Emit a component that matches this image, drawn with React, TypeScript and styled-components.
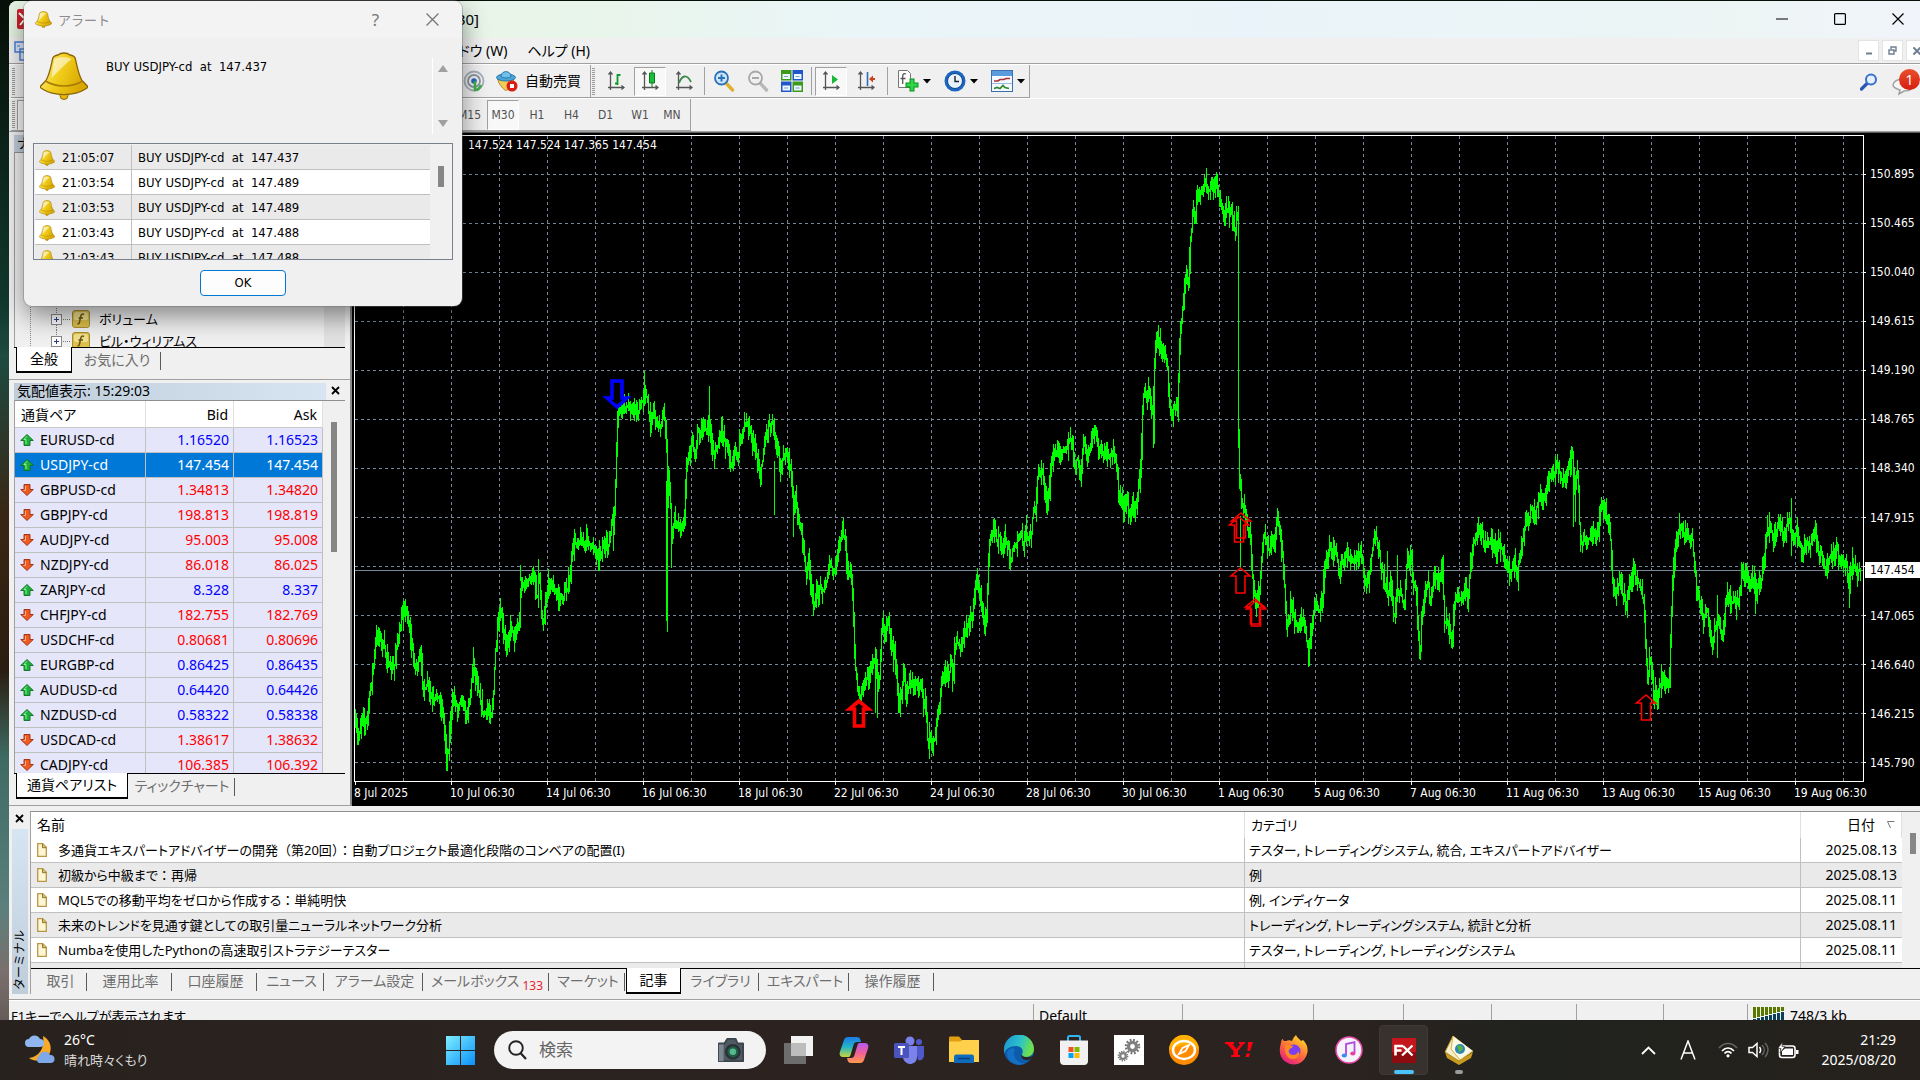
import React from 'react';
import styled, { createGlobalStyle, css } from 'styled-components';

const UI = "'Noto Sans', 'Noto Sans CJK JP', sans-serif";
const TAHOMA = "'DejaVu Sans Condensed', 'DejaVu Sans', 'Noto Sans CJK JP', sans-serif";

const Global = createGlobalStyle`
  * { box-sizing: border-box; }
  html, body { margin: 0; height: 100%; overflow: hidden; }
  body {
    background: #131a14;
    color: #000;
    font: 14px/20px ${UI};
    font-feature-settings: 'palt';
  }
  button, input { font: inherit; font-feature-settings: inherit; color: inherit; margin: 0; padding: 0; border: 0; background: none; }
  table { border-spacing: 0; border-collapse: separate; width: 100%; table-layout: fixed; }
  th, td { padding: 0; font-weight: 400; text-align: left; white-space: nowrap; }
  svg { display: block; flex: none; }
`;

/* ---------- shell ---------- */

const Desktop = styled.div`
  height: 100vh;
  display: flex;
  flex-direction: column;
  background: linear-gradient(180deg, #071008 0%, #12392e 28%, #1e4a40 33%, #3a2614 48%, #2a1c10 62%, #3e6a62 70%, #5b7f7c 84%, #7a6f6c 90%, #4a4440 100%);
`;

const AppWindow = styled.main`
  flex: 1;
  min-height: 0;
  margin: 1px 0 0 9px;
  background: #f0f0f0;
  border-top-left-radius: 8px;
  display: flex;
  flex-direction: column;
  overflow: hidden;
`;

const TitleBar = styled.header`
  flex: none;
  height: 37px;
  padding: 0 0 1px 8px;
  display: flex;
  align-items: center;
  background: linear-gradient(90deg, #e6f3e4 0%, #e8f5e8 28%, #eaf5f8 45%, #eaf3f9 65%, #ecf5f4 90%, #f1f4fa 100%);
`;

const TitleText = styled.span`
  width: 442px;
  text-align: right;
  font-size: 15px;
  flex: none;
`;

const WindowButtons = styled.div`
  margin-left: auto;
  display: flex;
`;

const WindowButton = styled.button`
  width: 58px;
  height: 36px;
  display: grid;
  place-items: center;
  &:last-child { width: 51px; padding-left: 7px; }
`;

const MenuBar = styled.nav`
  flex: none;
  height: 26px;
  padding-left: 5px;
  display: flex;
  align-items: center;
  border-bottom: 1px solid #a0a0a0;
`;

const MenuItems = styled.div`
  display: flex;
  gap: 20px;
  width: 560px;
  justify-content: flex-end;
`;

const MdiButtons = styled.div`
  margin-left: auto;
  display: flex;
  gap: 3px;
`;

const MdiButton = styled.button`
  width: 21px;
  height: 21px;
  background: #fff;
  border: 1px solid #e3e3e3;
  display: grid;
  place-items: center;
  &:last-child { width: 14px; border-right: 0; overflow: hidden; place-items: center start; padding-left: 6px; }
`;

const Toolbar = styled.div<{ $h: number }>`
  flex: none;
  height: ${p => p.$h}px;
  display: flex;
  border-top: 1px solid #fff;
  padding-left: 2px;
`;

const ToolGroup = styled.div<{ $w: number }>`
  width: ${p => p.$w}px;
  height: 100%;
  display: flex;
  align-items: center;
  border-right: 1px solid #a0a0a0;
  border-bottom: 1px solid #a0a0a0;
`;

const Grip = styled.span`
  width: 3px;
  height: 27px;
  margin: 0 2px 0 1px;
  flex: none;
  background: repeating-linear-gradient(180deg, #9a9a9a 0 1px, #f0f0f0 1px 2px);
`;

const ToolButton = styled.button<{ $w: number; $on?: boolean }>`
  width: ${p => p.$w}px;
  height: 29px;
  flex: none;
  display: flex;
  align-items: center;
  justify-content: center;
  gap: 7px;
  white-space: nowrap;
  ${p => p.$on && css`
    border: 1px solid #a0a0a0;
    border-right-color: #fff;
    border-bottom-color: #fff;
    background: #f8f8f8;
  `}
`;

const DropButton = styled(ToolButton)`
  gap: 4px;
`;

const ToolSeparator = styled.span`
  width: 1px;
  height: 28px;
  margin: 0 3px;
  flex: none;
  background: #a0a0a0;
`;

const ToolTail = styled.div`
  margin-left: auto;
  display: flex;
  align-items: center;
  gap: 14px;
`;

const MailButton = styled.button`
  position: relative;
  width: 28px;
  height: 30px;
`;

const MailBadge = styled.span`
  position: absolute;
  left: 7px;
  top: 2px;
  width: 21px;
  height: 21px;
  border-radius: 50%;
  background: linear-gradient(#e8502f, #d81c10);
  color: #fff;
  font-size: 14px;
  line-height: 21px;
  text-align: center;
`;

const FrameButton = styled.button<{ $w: number; $on?: boolean }>`
  width: ${p => p.$w}px;
  height: 30px;
  flex: none;
  font: 12px/28px ${TAHOMA};
  color: #505050;
  text-align: center;
  ${p => p.$on && css`
    border: 1px solid #a0a0a0;
    border-right-color: #fff;
    border-bottom-color: #fff;
    background: #f8f8f8;
  `}
`;

const Main = styled.div`
  flex: 1;
  min-height: 0;
  display: grid;
  grid-template: minmax(0, 1fr) / 343px minmax(0, 1fr);
  border-top: 1px solid #a0a0a0;
`;

/* ---------- left column ---------- */

const Side = styled.aside`
  display: flex;
  flex-direction: column;
  min-height: 0;
  border-right: 2px solid #8a8a8a;
  border-bottom: 1px solid #a0a0a0;
`;

const Pane = styled.section<{ $h?: number }>`
  ${p => (p.$h ? `height: ${p.$h}px; flex: none; border-bottom: 1px solid #a0a0a0;` : 'flex: 1; min-height: 0;')}
  display: flex;
  flex-direction: column;
  padding: 3px 5px 6px;
`;

const PaneHead = styled.div`
  height: 17px;
  flex: none;
  display: flex;
  line-height: 16px;
`;

const PaneTitle = styled.h2`
  margin: 0;
  flex: 1;
  padding-left: 3px;
  font: inherit;
  background: linear-gradient(90deg, #bfcddb, #d7e4f2);
`;

const CloseButton = styled.button`
  width: 19px;
  height: 15px;
  display: grid;
  place-items: center;
`;

const PaneBox = styled.div`
  flex: 1;
  min-height: 0;
  display: flex;
  overflow: hidden;
  border-top: 1px solid #8f8f8f;
  border-left: 1px solid #a0a0a0;
`;

const Tree = styled.ul`
  flex: 1;
  margin: 0 0 -5px 15px;
  padding: 0 0 0 20px;
  list-style: none;
  display: flex;
  flex-direction: column;
  justify-content: flex-end;
  border-left: 1px dotted #8a8a8a;
`;

const TreeItem = styled.li`
  height: 22px;
  display: flex;
  align-items: center;
  font-size: 13px;
  line-height: 22px;
  white-space: nowrap;
  span { padding-left: 9px; }
`;

const Track = styled.div<{ $w: number; $bg?: string; $top: number }>`
  width: ${p => p.$w}px;
  flex: none;
  background: ${p => p.$bg ?? '#f0f0f0'};
  padding: ${p => p.$top}px 0 0 8px;
`;

const Thumb = styled.div<{ $h: number }>`
  width: 6px;
  height: ${p => p.$h}px;
  background: #868686;
`;

const Tabs = styled.div`
  height: 26px;
  flex: none;
  display: flex;
  border-top: 1px solid #000;
  padding-left: 2px;
`;

const Tab = styled.button<{ $w: number; $on?: boolean }>`
  width: ${p => p.$w}px;
  flex: none;
  height: 25px;
  color: #6e6e6e;
  line-height: 22px;
  white-space: nowrap;
  position: relative;
  border: 1px solid transparent;
  border-top: 0;
  ${p => p.$on ? css`
    color: #000;
    background: #fff;
    border: 1px solid #000;
    border-top: 0;
    border-bottom-width: 2px;
    margin-top: -1px;
    height: 26px;
  ` : css`
    &::after {
      content: '';
      position: absolute;
      right: 0;
      top: 4px;
      height: 18px;
      border-right: 1px solid #5a5a5a;
    }
  `}
`;

const TabCount = styled.sub`
  color: #e8222c;
  font: 12px/12px ${UI};
  padding-left: 3px;
`;

const WatchTable = styled.table`
  flex: 1;
  background: #fff;
  align-self: flex-start;
  th { height: 27px; padding: 0 5px 0 6px; border-right: 1px solid #e0e0e0; border-bottom: 1px solid #c8c8c8; line-height: 25px; }
  th + th { text-align: right; }
`;

const WatchRow = styled.tr<{ $up: boolean; $selected?: boolean }>`
  td {
    height: 25px;
    line-height: 24px;
    padding-right: 4px;
    text-align: right;
    color: ${p => (p.$selected ? '#fff' : p.$up ? '#0000ff' : '#ff0000')};
    background: ${p => (p.$selected ? '#0078d7' : '#e6e6fa')};
    border-right: 1px solid #c0c0c0;
    border-bottom: 1px solid #c0c0c0;
  }
  td:first-child { color: ${p => (p.$selected ? '#fff' : '#000')}; }
`;

const Pair = styled.div`
  display: flex;
  align-items: center;
  gap: 6px;
  padding-left: 5px;
`;

/* ---------- chart ---------- */

const ChartPanel = styled.section`
  display: grid;
  grid-template: minmax(0, 1fr) 24px / minmax(0, 1fr) 56px;
  padding: 2px 0 0 2px;
  background: #000;
  color: #fff;
  font: 12px/16px ${TAHOMA};
  border-top: 1px solid #606060;
`;

const Plot = styled.div`
  position: relative;
  border: 1px solid #fff;
  overflow: hidden;
  svg { width: 100%; height: 100%; }
`;

const Quote = styled.span`
  position: absolute;
  left: 113px;
  top: 1px;
  white-space: nowrap;
`;

const PriceAxis = styled.div`
  position: relative;
  display: flex;
  flex-direction: column;
  justify-content: space-between;
  padding: 31px 0 11px;
`;

const Price = styled.span`
  height: 16px;
  display: flex;
  align-items: center;
  gap: 4px;
  &::before { content: ''; width: 2px; height: 1px; background: #fff; }
`;

const CurrentPrice = styled.output`
  position: absolute;
  left: 1px;
  right: 0;
  top: 427px;
  height: 16px;
  padding-left: 5px;
  background: #fff;
  color: #000;
`;

const DateAxis = styled.div`
  display: flex;
  grid-column: 1 / -1;
  overflow: hidden;
`;

const DateLabel = styled.span`
  flex: none;
  width: 96px;
  white-space: nowrap;
  &::before { content: ''; display: block; width: 1px; height: 3px; margin-left: 1px; background: #fff; }
`;

/* ---------- terminal ---------- */

const Terminal = styled.section`
  flex: none;
  height: 194px;
  display: grid;
  grid-template: minmax(0, 1fr) / 21px minmax(0, 1fr);
  padding: 5px 0 5px;
  border-bottom: 1px solid #a0a0a0;
`;

const TerminalStrip = styled.div`
  display: flex;
  flex-direction: column;
  align-items: center;
  gap: 3px;
  min-height: 0;
`;

const TerminalName = styled.h2`
  margin: 0;
  flex: 1;
  width: 16px;
  background: linear-gradient(#bfcddb, #d7e4f2);
  writing-mode: vertical-rl;
  text-orientation: sideways;
  transform: rotate(180deg);
  font: 12px/16px ${UI};
  padding-top: 4px;
  white-space: nowrap;
`;

const TerminalBody = styled.div`
  display: flex;
  flex-direction: column;
  min-width: 0;
  min-height: 0;
  border-top: 1px solid #8f8f8f;
  border-left: 1px solid #a0a0a0;
`;

const Articles = styled.div`
  flex: 1;
  min-height: 0;
  display: flex;
  overflow: hidden;
`;

const ArticleTable = styled.table`
  flex: 1;
  align-self: flex-start;
  background: #fff;
  font-size: 13px;
  th { height: 26px; padding: 0 6px; border-right: 1px solid #e0e0e0; }
  td { height: 25px; padding: 0 5px 0 4px; line-height: 24px; border-right: 1px solid #c0c0c0; border-bottom: 1px solid #c0c0c0; }
  th:first-child { font-size: 14px; }
  th:last-child, td:last-child { text-align: right; font-size: 14px; }
  tbody tr:nth-child(even) { background: #eaeaea; }
  td:last-child { border-right: 0; }
`;

const ArticleName = styled.div`
  display: flex;
  align-items: center;
  gap: 11px;
  padding-left: 2px;
`;

const FullWidth = styled.span`
  font-feature-settings: normal;
`;

const SortLabel = styled.span`
  display: flex;
  justify-content: flex-end;
  align-items: center;
  gap: 12px;
`;

const StatusBar = styled.footer`
  flex: none;
  height: 20px;
  display: flex;
  overflow: hidden;
  border-top: 1px solid #fff;
  padding: 3px 0 0 2px;
`;

const StatusCell = styled.span<{ $w?: number }>`
  ${p => (p.$w ? `width: ${p.$w}px; flex: none;` : 'flex: 1; font-size: 13px;')}
  height: 24px;
  display: flex;
  gap: 6px;
  line-height: 24px;
  white-space: nowrap;
  &:not(:first-child) { border-left: 1px solid #a0a0a0; padding-left: 5px; }
`;

/* ---------- taskbar ---------- */

const Taskbar = styled.nav`
  flex: none;
  height: 60px;
  display: grid;
  grid-template-columns: 440px 1fr auto;
  align-items: center;
  background: linear-gradient(90deg, #28221e 0%, #2c2320 40%, #2b2320 70%, #20221e 80%, #26211c 100%);
  color: #fff;
`;

const Weather = styled.button`
  justify-self: start;
  margin-left: 24px;
  display: flex;
  align-items: center;
  gap: 9px;
  text-align: left;
  line-height: 20px;
  color: #fff;
`;

const Muted = styled.span`
  display: block;
  font-size: 13px;
  color: #d8d8d8;
`;

const TaskIcons = styled.div`
  display: flex;
  align-items: center;
`;

const TaskButton = styled.button<{ $on?: boolean }>`
  width: 49px;
  height: 50px;
  margin-right: 6px;
  flex: none;
  display: grid;
  place-items: center;
  position: relative;
  border-radius: 4px;
  border: 1px solid ${p => (p.$on ? '#3f3a37' : 'transparent')};
  background: ${p => (p.$on ? '#38322f' : 'transparent')};
`;

const RunMark = styled.span<{ $on?: boolean }>`
  position: absolute;
  bottom: 0;
  width: ${p => (p.$on ? 20 : 8)}px;
  height: 4px;
  border-radius: 2px;
  background: ${p => (p.$on ? '#4cc2ff' : '#9a9a9a')};
`;

const StartButton = styled.button`
  width: 41px;
  height: 50px;
  margin-right: 13px;
  display: grid;
  place-items: center;
`;

const SearchBox = styled.label`
  width: 272px;
  height: 38px;
  margin-right: 8px;
  border-radius: 19px;
  background: #f3f3f3;
  display: flex;
  align-items: center;
  gap: 12px;
  padding: 0 20px 0 14px;
  input { flex: 1; min-width: 0; font-size: 17px; outline: 0; }
  input::placeholder { color: #666; opacity: 1; }
`;

const Tray = styled.div`
  display: flex;
  align-items: center;
  padding-right: 24px;
`;

const TrayButton = styled.button<{ $w: number }>`
  width: ${p => p.$w}px;
  height: 40px;
  display: grid;
  place-items: center;
  color: #fff;
`;

const Clock = styled.time`
  width: 88px;
  text-align: right;
  line-height: 20px;
`;

/* ---------- alert dialog ---------- */

const Dialog = styled.div`
  position: absolute;
  left: 24px;
  top: 1px;
  width: 438px;
  height: 305px;
  border-radius: 8px;
  background: #f0f0f0;
  box-shadow: 0 0 0 1px rgba(110, 110, 110, 0.4), 0 10px 26px rgba(0, 0, 0, 0.45);
  display: flex;
  flex-direction: column;
  overflow: hidden;
  font: 13px/18px ${TAHOMA};
`;

const DialogTitle = styled.header`
  height: 37px;
  flex: none;
  display: flex;
  align-items: center;
  padding-left: 11px;
  background: #f3f3f3;
  color: #8c8c8c;
  font: 13px/20px ${UI};
  span { flex: 1; padding-left: 6px; }
`;

const DialogButton = styled.button`
  width: 57px;
  height: 36px;
  display: grid;
  place-items: center;
  color: #777;
  font-size: 17px;
  &:last-child { margin-right: 1px; }
`;

const Message = styled.div`
  height: 96px;
  flex: none;
  display: flex;
  padding: 14px 10px 0 16px;
  white-space: pre;
  p { margin: 6px 0 0; padding-left: 18px; flex: 1; }
`;

const Spinner = styled.div`
  width: 20px;
  height: 76px;
  margin-top: 6px;
  border-left: 1px solid #fff;
  display: flex;
  flex-direction: column;
  align-items: center;
  justify-content: space-between;
  padding: 7px 0;
`;

const AlertList = styled.div`
  height: 117px;
  flex: none;
  margin: 9px 9px 0;
  border: 1px solid #7a7f8e;
  background: #f0f0f0;
  display: flex;
  overflow: hidden;
  padding: 1px;
`;

const AlertTable = styled.table`
  flex: 1;
  align-self: flex-start;
  td { height: 25px; padding: 2px 0 0 6px; line-height: 22px; border-bottom: 1px solid #c0c0c0; white-space: pre; }
  td:first-child { border-right: 1px solid #c0c0c0; padding-left: 4px; }
  tr { background: #fff; }
  tr:nth-child(odd) { background: #eaeaea; }
`;

const TimeCell = styled.div`
  display: flex;
  align-items: center;
  gap: 7px;
`;

const OkButton = styled.button`
  width: 86px;
  height: 26px;
  margin: 10px 0 0 176px;
  border: 1px solid #0078d4;
  border-radius: 4px;
  background: #fdfdfd;
`;

/* ---------- icons ---------- */

const Bell = ({ size }: { size: number }) => (
  <svg width={size} height={size} viewBox="0 0 48 48">
    <defs>
      <linearGradient id="bell" x1="0" y1="0" x2="1" y2="0.4">
        <stop offset="0" stopColor="#fff3a0" />
        <stop offset="0.5" stopColor="#f2cf1c" />
        <stop offset="1" stopColor="#d9a800" />
      </linearGradient>
    </defs>
    <circle cx="24" cy="43.500" r="4" fill="#e6b800" stroke="#8a6508" />
    <path d="M24 1c2.500 0 4.500.7 6 2 3 .5 4.700 1.500 5.300 3.500C37 14 38.500 23 42 28.500l5.300 5.500c.6 1 .2 2-1.300 2.800C34 44.500 14 44.500 2 36.800.5 36 .1 35 .7 34L6 28.500C9.500 23 11 14 12.700 6.500 13.300 4.500 15 3.500 18 3c1.500-1.300 3.500-2 6-2z" fill="url(#bell)" stroke="#8a6508" strokeWidth="1.300" />
    <path d="M5.500 29c10 6.500 27 6.500 37 0" fill="none" stroke="#a87c08" strokeWidth="1.500" />
    <path d="M14.500 7c6-2.500 13-2.500 17 0-5 4-12 11-20 19 1-7 1.500-13 3-19z" fill="#fff" opacity="0.55" />
  </svg>
);

const Cross = ({ size, w = 1.2, color = 'currentColor' }: { size: number; w?: number; color?: string }) => (
  <svg width={size} height={size} viewBox="0 0 12 12">
    <path d="M0.500 0.500l11 11M11.500 0.500l-11 11" stroke={color} strokeWidth={w} fill="none" />
  </svg>
);

const PaneCross = () => (
  <svg width="9" height="9" viewBox="0 0 9 9"><path d="M1 1l7 7M8 1L1 8" stroke="#000" strokeWidth="1.800" /></svg>
);

const TrendArrow = ({ up }: { up: boolean }) => (
  <svg width="14" height="14" viewBox="0 0 14 14">
    {up
      ? <path d="M7 1.500l6.300 6H10V12.500H4V7.500H.7z" fill="#1fb03a" stroke="#0d6f22" strokeWidth="0.900" />
      : <path d="M7 12.500l6.300-6H10V1.500H4V6.500H.7z" fill="#ee5a24" stroke="#9c2c0c" strokeWidth="0.900" />}
    {up ? <path d="M7 3.200L4 6.500h2V11" stroke="#8df09a" fill="none" /> : <path d="M5.500 3v4.500h-2" stroke="#ffb08a" fill="none" />}
  </svg>
);

const PageIcon = () => (
  <svg width="10" height="14" viewBox="0 0 10 14">
    <path d="M.7.700h5l3.600 3.600v9H.7z" fill="#fdf6d2" stroke="#b89848" strokeWidth="1.300" />
    <path d="M5.500.700v4h4" fill="#d8bc68" stroke="#96782c" />
  </svg>
);

const FuncIcon = () => (
  <svg width="18" height="18" viewBox="0 0 18 18">
    <rect x="0.500" y="0.500" width="17" height="17" rx="2.500" fill="#dcbf4c" stroke="#a88f30" />
    <rect x="2" y="2" width="14" height="8" rx="2" fill="#f0e08c" />
    <path d="M12 4.500c-2-1-3 0-3.300 2L7.500 12c-.3 1.700-1 2-2 1.600M6.500 8h4.500" stroke="#6b5510" strokeWidth="1.500" fill="none" />
  </svg>
);

const ExpandBox = () => (
  <svg width="21" height="22" viewBox="0 0 21 22">
    <path d="M5.500 0v6M5.500 17v5M12 11.500h8" stroke="#777" strokeDasharray="1 1" />
    <rect x="0.500" y="6.500" width="10" height="10" fill="#fff" stroke="#888" />
    <path d="M3 11.500h5M5.500 9v5" stroke="#2a3f8f" />
  </svg>
);

const Axes = ({ children }: { children: React.ReactNode }) => (
  <svg width="18" height="22" viewBox="0 0 18 22">
    <path d="M3.500 2v18M1 17.500h16M1.500 4.500l2-2.500 2 2.500M14.500 15.500l2.500 2-2.500 2" stroke="#555" strokeWidth="1.300" fill="none" />
    {children}
  </svg>
);

const Magnifier = ({ sign, tone }: { sign: string; tone: [string, string, string] }) => (
  <svg width="22" height="22" viewBox="0 0 22 22">
    <path d="M13 13l6.500 7" stroke={tone[2]} strokeWidth="3.400" strokeLinecap="round" />
    <circle cx="8.500" cy="8" r="6.500" fill={tone[1]} stroke={tone[0]} strokeWidth="1.800" />
    <path d={sign} stroke={tone[0]} strokeWidth="2" />
  </svg>
);

const Caret = () => (
  <svg width="8" height="5" viewBox="0 0 8 5"><path d="M0 0h8L4 4.500z" fill="#000" /></svg>
);

const SignalIcon = () => (
  <svg width="22" height="22" viewBox="0 0 22 22" fill="none">
    <circle cx="11" cy="11" r="9.500" stroke="#a5aeb8" strokeWidth="1.800" />
    <circle cx="11" cy="11" r="6" stroke="#8794a0" strokeWidth="1.800" />
    <circle cx="11" cy="11" r="2.800" fill="#2469b8" />
    <path d="M12 11v9c3 0 5-2 6-5" stroke="#3fae49" strokeWidth="2.500" />
  </svg>
);

const AutoTradeIcon = () => (
  <svg width="22" height="22" viewBox="0 0 22 22">
    <path d="M1.500 8.500c1 5 4 9 8 12l8-3V8z" fill="#f0cc58" stroke="#b8892a" />
    <ellipse cx="10" cy="7.500" rx="9.500" ry="3.500" fill="#4aa5d8" stroke="#2a75a8" />
    <path d="M5 6.500C5 0 15 0 15 6.500c-3 2-7 2-10 0z" fill="#6fc0ea" stroke="#2a75a8" />
    <circle cx="16" cy="16" r="5.500" fill="#dd1d12" />
    <rect x="14" y="14" width="4" height="4" fill="#fff" />
  </svg>
);

const TileIcon = () => (
  <svg width="22" height="22" viewBox="0 0 22 22">
    <rect width="10.500" height="10.500" fill="#3a9a1c" /><rect x="11.500" width="10.500" height="10.500" fill="#2156c8" />
    <rect y="11.500" width="10.500" height="10.500" fill="#2156c8" /><rect x="11.500" y="11.500" width="10.500" height="10.500" fill="#3a9a1c" />
    <path d="M1.500 4h7.500v5H1.500zM13 4h7.500v5H13zM1.500 15.500h7.500v5H1.500zM13 15.500h7.500v5H13z" fill="#eef6ff" />
    <path d="M3 6.500h4M14.500 6.500h4M3 18h4M14.500 18h4" stroke="#7a9fd0" />
  </svg>
);

const IndicatorIcon = () => (
  <svg width="22" height="24" viewBox="0 0 22 24">
    <path d="M1.500 1.500h9l3 3v14h-12z" fill="#fff" stroke="#777" />
    <path d="M9 5c-2-1-3 0-3.300 2v8M3.500 9.500h5" stroke="#555" fill="none" strokeWidth="1.300" />
    <path d="M15 9.500v13M8.500 16h13" stroke="#0b8f1c" strokeWidth="5" />
    <path d="M15 10.500v11M9.500 16h11" stroke="#2fd646" strokeWidth="3" />
  </svg>
);

const ClockIcon = () => (
  <svg width="22" height="22" viewBox="0 0 22 22">
    <circle cx="11" cy="11" r="10.500" fill="#1c66c0" /><circle cx="11" cy="11" r="7.500" fill="#e8f2fc" stroke="#0d4590" />
    <path d="M11 6v5.500h4" stroke="#222" strokeWidth="1.400" fill="none" />
  </svg>
);

const TemplateIcon = () => (
  <svg width="22" height="22" viewBox="0 0 22 22">
    <rect x="0.500" y="0.500" width="21" height="21" fill="#f4f9ff" stroke="#3c6fae" />
    <rect x="1" y="1" width="20" height="5" fill="#5c9ade" />
    <path d="M3 11h4l2-1.500h4l2-1h4" stroke="#a33" strokeWidth="1.700" fill="none" />
    <path d="M3 18.500l3-1 3 1 3-3 2 2 4 1" stroke="#2b8a2b" strokeWidth="1.700" fill="none" />
    <path d="M1 13.500h20" stroke="#9bbce0" />
  </svg>
);

const Svg = ({ w = 30, children }: { w?: number; children: React.ReactNode }) => (
  <svg width={w} height={w} viewBox="0 0 30 30">{children}</svg>
);

const CameraIcon = () => (
  <svg width="30" height="26" viewBox="0 0 30 28">
    <path d="M2 7h6l3-5h9l2 5h6v19H2z" fill="#505a62" stroke="#3c454c" strokeLinejoin="round" strokeWidth="2" />
    <path d="M2 8h5v18H2z" fill="#7d8890" />
    <circle cx="17" cy="16" r="8.500" fill="#2b3135" /><circle cx="17" cy="16" r="6" fill="#1f5c46" /><circle cx="17" cy="16" r="3.500" fill="#56b98c" />
  </svg>
);

const Gear = ({ x, y, r }: { x: number; y: number; r: number }) => (
  <g>
    <circle cx={x} cy={y} r={r} fill="none" stroke="#777" strokeWidth={r * 0.4} strokeDasharray={`${r * 0.28} ${r * 0.24}`} />
    <circle cx={x} cy={y} r={r * 0.62} fill="none" stroke="#808080" strokeWidth={r * 0.5} />
  </g>
);

const taskIcons: { name: string; icon: React.ReactNode }[] = [
  { name: 'タスク ビュー', icon: <Svg><path d="M0 8h22v21H0z" fill="#6d6d6d" /><path d="M7 1h22v20H7z" fill="#f2f2f2" /><path d="M7 8h15v13H7z" fill="#bdbdbd" /></Svg> },
  { name: 'Copilot', icon: <Svg>
    <defs>
      <linearGradient id="cpA" x1="0" y1="0" x2="0" y2="1"><stop offset="0" stopColor="#1c7be8" /><stop offset="0.5" stopColor="#22b5c8" /><stop offset="1" stopColor="#c9d53a" /></linearGradient>
      <linearGradient id="cpB" x1="0" y1="0" x2="0" y2="1"><stop offset="0" stopColor="#b45af0" /><stop offset="0.5" stopColor="#f06098" /><stop offset="1" stopColor="#ff9a4c" /></linearGradient>
    </defs>
    <path d="M9 2h9c2 0 3 1 3.500 3l.5 2h-4c-2 0-3 1-3.500 3l-3 10c-.5 2-1.500 2-3.500 2H5c-4 0-5-2-4-5.500L5 5c.7-2 2-3 4-3z" fill="url(#cpA)" />
    <path d="M21 28h-9c-2 0-3-1-3.500-3L8 23h4c2 0 3-1 3.500-3l3-10c.5-2 1.500-2 3.500-2h3c4 0 5 2 4 5.500L25 25c-.7 2-2 3-4 3z" fill="url(#cpB)" />
  </Svg> },
  { name: 'Teams', icon: <Svg><circle cx="16" cy="6" r="4.500" fill="#7b83eb" /><circle cx="25" cy="7" r="3" fill="#5059c9" /><path d="M21 11h9v9c0 4-3 6-6 5z" fill="#5059c9" /><path d="M9 11h14v11c0 5-4 7-7 7s-7-3-7-7z" fill="#7b83eb" /><rect x="0" y="8" width="15" height="15" rx="1.500" fill="#4b53bc" /><path d="M4 12h7M7.500 12v8" stroke="#fff" strokeWidth="2" /></Svg> },
  { name: 'エクスプローラー', icon: <Svg><path d="M0 3c0-1 .5-1.500 1.500-1.500H10L13 5h17v6H0z" fill="#e0a010" /><path d="M0 6.500h11L14 5h16v22H0z" fill="#ffd04c" /><path d="M5 21.500c0-1 1-2 2-2h16c1 0 2 1 2 2V28H5z" fill="#0f6cbd" /><path d="M9 23.500h12" stroke="#083f7c" strokeWidth="1.500" /></Svg> },
  { name: 'Edge', icon: <Svg>
    <defs><linearGradient id="edA" x1="0" y1="0" x2="1" y2="0.300"><stop offset="0" stopColor="#1b90d8" /><stop offset="0.600" stopColor="#2cc3c8" /><stop offset="1" stopColor="#6fe04c" /></linearGradient></defs>
    <circle cx="15" cy="15" r="15" fill="#0d5cab" />
    <path d="M0 15A15 15 0 0 1 30 14c0 5-4 8-8 8-3 0-5-1-4-3 2-3 0-8-6-8S1 14 0 19z" fill="url(#edA)" />
    <path d="M11 14c-3 5 0 14 10 14.500C14 32 4 28 3 19c0-4 4-7 8-5z" fill="#1370c4" />
    <path d="M18 19c-2 3 1 6 5 6 3 0 5-2 6-4-2 1-4 1.500-7 1-3 0-4-1-4-3z" fill="#2b2320" />
  </Svg> },
  { name: 'Microsoft Store', icon: <Svg><path d="M9 6V2.500C9 1.500 9.500 1 10.500 1h9c1 0 1.500.5 1.500 1.500V6" fill="none" stroke="#30b5f0" strokeWidth="2" /><path d="M1 5.500h28V26c0 2-1 4-4 4H5c-3 0-4-2-4-4z" fill="#f1f1f1" /><path d="M9.500 12h5v5h-5z" fill="#f25022" /><path d="M15.500 12h5v5h-5z" fill="#7fba00" /><path d="M9.500 18h5v5h-5z" fill="#00a4ef" /><path d="M15.500 18h5v5h-5z" fill="#ffb900" /></Svg> },
  { name: '設定', icon: <Svg><path d="M0 0h30v30H0z" fill="#fff" /><Gear x={18.500} y={11.500} r={6.500} /><Gear x={9} y={21} r={4.500} /></Svg> },
  { name: 'コンパス', icon: <Svg><circle cx="15" cy="15" r="15" fill="#ff8c00" /><path d="M15 0a15 15 0 0 1 15 15c-4-6-20-6-30 0A15 15 0 0 1 15 0z" fill="#ffb000" /><ellipse cx="15" cy="15" rx="11" ry="9" fill="none" stroke="#fff" strokeWidth="2.500" /><path d="M10 19l3.500-6L20 10l-3.500 6z" fill="none" stroke="#fff" strokeWidth="1.800" /></Svg> },
  { name: 'Yahoo', icon: <Svg><path d="M1 7h9v2H8.500l4 5 4-5H15V7h6v2h-1.500L14 16v4h2v2H7v-2h2.500v-4L3 9H1z" fill="#ff0010" /><path d="M24 7h5l-3 9h-2.500zM22.500 18.500h3.500l-1 3.500h-3.500z" fill="#ff0010" /></Svg> },
  { name: 'Firefox', icon: <Svg>
    <defs><linearGradient id="ffA" x1="0.800" y1="0" x2="0.200" y2="1"><stop offset="0" stopColor="#ffe226" /><stop offset="0.500" stopColor="#ff7139" /><stop offset="1" stopColor="#e31587" /></linearGradient></defs>
    <path d="M2 8c0-2 1-4 2-4 0 2 1 2 3 2 2-1 4-1 6 0 1-3 3-5 4-6 1 3 4 4 5 6l2-1c4 4 5 8 4.500 12C27 25 21 29.500 15 29.500S1 25 .8 16c0-3 .5-6 1.200-8z" fill="url(#ffA)" />
    <circle cx="15" cy="16" r="6.500" fill="#7a3ff0" /><path d="M6 10c3-1 5 1 8 1 0 2-3 2-4 4s1 5 4 5 5-2 5-4c3 4-1 8-5 8-6 0-9-6-8-14z" fill="#ff8a1f" />
  </Svg> },
  { name: 'iTunes', icon: <Svg><circle cx="15" cy="15" r="13" fill="#f6f2fa" stroke="#e84aa8" strokeWidth="1.500" /><path d="M12 20V9l8.500-1.800V18" stroke="#b04ae0" strokeWidth="1.800" fill="none" /><ellipse cx="10.300" cy="20.500" rx="2.600" ry="2" fill="#3c8af0" /><ellipse cx="18.800" cy="18.500" rx="2.600" ry="2" fill="#e8409c" /></Svg> },
];

const FxIcon = () => (
  <svg width="24" height="25" viewBox="0 0 24 25">
    <path d="M0 0h24v25H0z" fill="#c4161c" /><path d="M0 14h24v11H0z" fill="#8e0c10" />
    <path d="M3.500 17.500V8H11M3.500 12.500H9.500" stroke="#fff" strokeWidth="2.600" fill="none" />
    <path d="M11 8l9.500 9.500M20.500 7.500L10 17.500" stroke="#fff" strokeWidth="2.400" />
  </svg>
);

const BookIcon = () => (
  <Svg><path d="M1 17l14 9 14-9-2 6-12 7L3 23z" fill="#c89a20" /><path d="M9 1l19 15-13 10L1 17z" fill="#f5efd0" stroke="#b8901c" /><path d="M9 1L7 14l9 11 13-9" fill="#fbf8e6" stroke="#d8b440" /><circle cx="16" cy="14" r="5" fill="#2a86b8" /><path d="M13 11c3-2 6 0 6 3l-4 4c0-3-1-4-2-7z" fill="#5cb040" /></Svg>
);

/* ---------- data ---------- */

const pairs: [string, string, string, boolean][] = [
  ['EURUSD-cd', '1.16520', '1.16523', true],
  ['USDJPY-cd', '147.454', '147.454', true],
  ['GBPUSD-cd', '1.34813', '1.34820', false],
  ['GBPJPY-cd', '198.813', '198.819', false],
  ['AUDJPY-cd', '95.003', '95.008', false],
  ['NZDJPY-cd', '86.018', '86.025', false],
  ['ZARJPY-cd', '8.328', '8.337', true],
  ['CHFJPY-cd', '182.755', '182.769', false],
  ['USDCHF-cd', '0.80681', '0.80696', false],
  ['EURGBP-cd', '0.86425', '0.86435', true],
  ['AUDUSD-cd', '0.64420', '0.64426', true],
  ['NZDUSD-cd', '0.58322', '0.58338', true],
  ['USDCAD-cd', '1.38617', '1.38632', false],
  ['CADJPY-cd', '106.385', '106.392', false],
];

const alerts = [
  ['21:05:07', '147.437'],
  ['21:03:54', '147.489'],
  ['21:03:53', '147.489'],
  ['21:03:43', '147.488'],
  ['21:03:43', '147.488'],
];

const articles = [
  ['多通貨エキスパートアドバイザーの開発（第20回）：自動プロジェクト最適化段階のコンベアの配置(I)', 'テスター, トレーディングシステム, 統合, エキスパートアドバイザー', '2025.08.13'],
  ['初級から中級まで：再帰', '例', '2025.08.13'],
  ['MQL5での移動平均をゼロから作成する：単純明快', '例, インディケータ', '2025.08.11'],
  ['未来のトレンドを見通す鍵としての取引量ニューラルネットワーク分析', 'トレーディング, トレーディングシステム, 統計と分析', '2025.08.11'],
  ['Numbaを使用したPythonの高速取引ストラテジーテスター', 'テスター, トレーディング, トレーディングシステム', '2025.08.11'],
  ['', '', ''],
];

const terminalTabs: [string, number][] = [
  ['取引', 55], ['運用比率', 85], ['口座履歴', 85], ['ニュース', 67], ['アラーム設定', 99], ['メールボックス', 126], ['マーケット', 76],
  ['記事', 55], ['ライブラリ', 79], ['エキスパート', 90], ['操作履歴', 85],
];

/* The empty slot is the level that the current price tag covers. */
const prices = ['150.895', '150.465', '150.040', '149.615', '149.190', '148.765', '148.340', '147.915', '', '147.065', '146.640', '146.215', '145.790'];
const dates = ['8 Jul 2025', '10 Jul 06:30', '14 Jul 06:30', '16 Jul 06:30', '18 Jul 06:30', '22 Jul 06:30', '24 Jul 06:30', '28 Jul 06:30', '30 Jul 06:30', '1 Aug 06:30', '5 Aug 06:30', '7 Aug 06:30', '11 Aug 06:30', '13 Aug 06:30', '15 Aug 06:30', '19 Aug 06:30'];

/* Price track in three stretches; each has its own time scale, the price scale is shared. */
const stretches = [
  { scale: 2.8, origin: -15, track: '43,1375 49,1410 55,1380 62,1345 68,1375 76,1350 84,1290 92,1240 98,1190 106,1162 114,1185 122,1200 132,1225 140,1252 150,1248 157,1190 165,1170 171,1140 178,1105 185,1120 192,1150 200,1200 208,1240 216,1238 224,1220 230,1275 238,1300 245,1275 252,1310 262,1325 270,1300 278,1325 286,1340 292,1400 297,1445 302,1435 306,1385 312,1335 318,1310 328,1340 337,1305 345,1335 353,1355 362,1310 368,1270 373,1235 378,1265 386,1290 392,1320 400,1350 412,1345 422,1350 428,1310 433,1220 438,1170 444,1140 450,1120 456,1170 466,1195 474,1160 480,1145 486,1185 494,1150 500,1160 506,1045 514,1060 524,1050 534,1040 543,1040 550,1090 556,1030 561,1100 567,1150 574,1100 582,1055 590,1050 600,1075 612,1085 622,1090 632,1065 642,1050 650,970 660,958 672,955 684,965 692,945 700,975 708,965 716,985 724,990 734,970 745,970 754,955 760,905 765,925 768,880 773,740 778,655 785,665 790,645 800,655 812,658 822,655 830,670 838,655 846,640 852,600 858,640 868,690 876,655 886,690 898,690 906,670 912,720 916,860 920,800 926,920 929,960 934,900 945,915 955,935 963,900 968,790 976,760 984,730 993,770 1001,695 1010,720 1020,695 1030,710 1034,690 1040,745 1048,765 1058,730 1068,705 1078,735 1088,745 1093,795 1102,750 1112,770 1118,730 1128,700 1140,685 1150,720 1160,745 1168,775 1175,820 1182,770 1190,715 1200,690 1213,690 1222,760 1225,740 1233,800 1240,765 1252,760 1262,800 1270,890 1275,860 1283,920 1290,920 1300,1010 1304,1040 1309,985 1315,1050 1326,1100 1334,1080 1345,1055 1353,1075 1362,1040 1370,1005 1378,1030 1386,1020 1394,970 1406,930 1414,970 1421,1035 1428,1015 1434,1100 1440,1220 1447,1290 1454,1310 1462,1280 1472,1265 1482,1250 1492,1245 1498,1210 1503,1290 1510,1270 1516,1130 1522,1170 1534,1130 1542,1200 1550,1190 1556,1260 1564,1340' },
  { scale: 3, origin: 525, track: '62,1310 70,1245 78,1310 88,1265 98,1285 106,1270 116,1290 125,1295 130,1325 137,1300 139,1400 143,1420 149,1385 155,1410 165,1400 172,1350 180,1310 186,1270 194,1250 204,1275 211,1215 217,1280 222,1200 228,1185 237,1200 246,1180 256,1165 266,1130 275,1140 282,1080 290,1045 298,1070 306,1110 312,1160 320,1100 327,960 336,945 344,930 350,970 355,930 362,980 372,950 382,960 390,1000 400,970 408,965 416,940 424,945 428,975 434,920 445,965 453,930 460,870 464,910 470,820 480,795 488,800 493,850 500,875 508,830 514,770 524,760 536,745 548,748 560,748 570,725 576,740 580,785 592,770 598,820 604,770 610,720 616,755 628,755 636,710 646,705 653,755 660,745 668,765 678,765 690,760 704,760 709,790 714,860 722,855 728,895 737,855 745,885 752,895 758,865 764,895 771,850 778,820 783,740 786,650 790,620 798,635 804,605 810,640 816,660 820,720 822,540 828,510 832,495 840,510 850,530 860,540 864,620 872,690 880,650 886,650 891,680 895,560 898,480 902,470 908,410 914,365 919,345 923,385 928,300 934,240 937,200 943,230 950,165 957,180 966,155 975,145 985,165 992,150 1000,160 1006,140 1012,165 1020,190 1030,210 1037,195 1045,210 1054,215 1063,255 1069,215 1072,230 1073,700 1077,800 1082,860 1088,870 1095,900 1102,930 1110,950 1115,1030 1120,1070 1128,1100 1136,1080 1142,1010 1150,940 1158,960 1166,980 1175,945 1182,970 1190,890 1198,940 1206,1000 1213,1070 1219,1140 1225,1150 1231,1090 1240,1130 1252,1160 1262,1140 1268,1130 1276,1170 1284,1215 1292,1150 1302,1100 1314,1120 1324,1090 1332,1030 1340,1000 1348,970 1357,985 1366,970 1375,1040 1384,1010 1394,985 1404,990 1416,1000 1430,1000 1440,975 1448,1020 1456,1055 1466,1040 1476,970 1484,940 1492,980 1502,1010 1512,1060 1522,1070 1530,1050 1541,1130 1550,1070' },
  { scale: 2.904, origin: 1025, track: '54,1060 62,1090 70,1100 76,1010 83,1000 89,990 95,1050 104,1080 109,1170 115,1210 120,1130 130,1060 138,1055 144,1110 152,1060 156,1020 164,1045 173,1040 181,1020 185,1140 193,1130 201,1160 208,1200 213,1110 220,1070 228,1095 236,1095 246,1060 253,1100 261,1010 268,960 275,945 284,935 292,945 302,960 314,965 328,955 335,990 343,965 354,975 362,1000 371,1030 382,1015 390,995 396,1045 403,1000 410,965 417,925 426,920 436,885 446,895 455,880 463,845 472,860 482,845 492,810 502,815 512,785 520,800 528,830 536,810 543,785 552,770 559,765 563,860 568,790 574,830 580,960 588,955 600,955 612,945 624,940 632,955 640,870 650,880 658,900 668,960 674,1040 682,1095 690,1060 695,1030 702,1070 713,1110 722,1070 735,1030 745,1045 755,1065 766,1110 770,1200 776,1290 781,1230 786,1225 791,1290 797,1310 800,1280 804,1330 812,1280 822,1265 832,1275 840,1280 843,1150 848,1050 855,990 862,935 872,920 882,945 892,950 903,940 911,1000 918,1070 928,1100 938,1130 948,1110 955,1160 962,1195 972,1160 980,1130 988,1170 996,1170 1002,1100 1010,1080 1020,1095 1036,1105 1044,1060 1052,1025 1060,1035 1072,1050 1084,1040 1090,1080 1098,1050 1108,1040 1114,1000 1122,930 1132,920 1140,955 1150,930 1160,925 1172,940 1184,910 1192,920 1198,960 1208,935 1218,970 1226,990 1236,960 1246,970 1256,940 1264,940 1270,980 1280,980 1288,1025 1296,1015 1306,985 1316,995 1326,960 1334,1015 1345,1000 1355,1020 1361,1060 1366,1030 1370,990 1380,1030 1388,1030 1396,1020' },
];

const spikes = [
  [118, 511, 530], [165, 429, 445], [183, 423, 450], [258, 375, 415], [289, 235, 262], [311, 345, 485], [312, 330, 496], [313, 330, 372], [316, 380, 432],
  [354, 250, 300], [419, 325, 379], [438, 350, 401], [520, 512, 577], [522, 540, 582], [538, 500, 536],
  [798, 250, 312], [885, 380, 433], [1032, 415, 460], [1042, 419, 460], [1055, 409, 440], [1218, 323, 391], [1220, 340, 386],
  [1362, 459, 522], [1400, 440, 478], [1436, 362, 420], [1494, 430, 472],
];

const toY = (v: number) => v * 0.44 - 16;

function buildBars() {
  const pts = stretches.flatMap(s =>
    s.track.split(' ').map(p => {
      const [x, y] = p.split(',').map(Number);
      return [x / s.scale + s.origin, toY(y)];
    }),
  );
  let seed = 7;
  const rnd = () => ((seed = (seed * 16807) % 2147483647) / 2147483647);
  let i = 0;
  let prev = pts[0][1];
  let d = '';
  for (let x = 0; x < 1506; x++) {
    while (i < pts.length - 2 && pts[i + 1][0] < x) i++;
    const [x0, y0] = pts[i];
    const [x1, y1] = pts[i + 1];
    const t = x1 === x0 ? 0 : Math.min(1, Math.max(0, (x - x0) / (x1 - x0)));
    const mid = y0 + (y1 - y0) * t + (rnd() - 0.5) * 7;
    const top = Math.min(prev, mid) - 1 - rnd() ** 1.6 * 13;
    const bottom = Math.max(prev, mid) + 1 + rnd() ** 1.6 * 13;
    d += `M${x + 0.5} ${Math.round(top)}V${Math.round(bottom)}`;
    prev = mid;
  }
  spikes.forEach(([x, a, b]) => { d += `M${x + 0.5} ${a}V${b}`; });
  return d;
}

const bars = buildBars();
const columns = Array.from({ length: 31 }, (_, k) => 48 * (k + 1) + 0.5);
const rows = Array.from({ length: 13 }, (_, k) => 38.5 + k * 49);

const Signal = ({ x, y, down, heavy }: { x: number; y: number; down?: boolean; heavy?: boolean }) => (
  <path
    d={down ? 'M0 0l-10-9h5v-17h10v17h5z' : 'M0 0l-9.500 8h5v17h9v-17h5z'}
    transform={`translate(${x} ${y})`}
    fill="none"
    stroke={down ? '#0000ff' : '#ff0000'}
    strokeWidth={heavy ? 3.6 : 1.6}
  />
);

/* ---------- sections ---------- */

function AlertDialog() {
  return (
    <Dialog role="dialog" aria-label="アラート">
      <DialogTitle>
        <Bell size={17} />
        <span>アラート</span>
        <DialogButton>?</DialogButton>
        <DialogButton aria-label="閉じる"><Cross size={13} /></DialogButton>
      </DialogTitle>
      <Message>
        <Bell size={48} />
        <p>{'BUY USDJPY-cd  at  147.437'}</p>
        <Spinner>
          <svg width="10" height="7" viewBox="0 0 10 7"><path d="M5 0l5 7H0z" fill="#a0a0a0" /></svg>
          <svg width="10" height="7" viewBox="0 0 10 7"><path d="M5 7L0 0h10z" fill="#a0a0a0" /></svg>
        </Spinner>
      </Message>
      <AlertList>
        <AlertTable>
          <colgroup><col style={{ width: 97 }} /><col /></colgroup>
          <tbody>
            {alerts.map(([time, price], i) => (
              <tr key={i}>
                <td><TimeCell><Bell size={16} />{time}</TimeCell></td>
                <td>{`BUY USDJPY-cd  at  ${price}`}</td>
              </tr>
            ))}
          </tbody>
        </AlertTable>
        <Track $w={21} $top={21}><Thumb $h={21} /></Track>
      </AlertList>
      <OkButton>OK</OkButton>
    </Dialog>
  );
}

function Toolbars() {
  return (
    <>
      <Toolbar $h={34}>
        <ToolGroup $w={580}>
          <Grip />
          <ToolButton $w={443} aria-label="新規チャート" />
          <ToolButton $w={28} aria-label="シグナル"><SignalIcon /></ToolButton>
          <ToolButton $w={101}><AutoTradeIcon />自動売買</ToolButton>
        </ToolGroup>
        <ToolGroup $w={439}>
          <Grip />
          <ToolButton $w={37} aria-label="バーチャート"><Axes><path d="M10.500 4v11M10.500 5h3M8 13.500h2.500" stroke="#0a9a28" strokeWidth="1.800" /></Axes></ToolButton>
          <ToolButton $w={32} $on aria-label="ローソク足"><Axes><path d="M11 0v17" stroke="#0a7a1c" /><path d="M8.500 3h5v10h-5z" fill="#16c038" stroke="#0a7a1c" /></Axes></ToolButton>
          <ToolButton $w={35} aria-label="ラインチャート"><Axes><path d="M4 13c3-8 8-9 12-1" stroke="#3a8a48" fill="none" strokeWidth="1.800" /></Axes></ToolButton>
          <ToolSeparator />
          <ToolButton $w={32} aria-label="ズームイン"><Magnifier sign="M5 8h7M8.500 4.500v7" tone={['#2a72b8', '#cfe6fa', '#e0b030']} /></ToolButton>
          <ToolButton $w={36} aria-label="ズームアウト"><Magnifier sign="M5 8h7" tone={['#a8a8a8', '#f0f0f0', '#b8b8b8']} /></ToolButton>
          <ToolButton $w={32} aria-label="整列"><TileIcon /></ToolButton>
          <ToolSeparator />
          <ToolButton $w={32} $on aria-label="自動スクロール"><Axes><path d="M10 5l6 4.500-6 4.500z" fill="#18b838" /></Axes></ToolButton>
          <ToolButton $w={37} aria-label="チャートシフト"><Axes><path d="M10.500 2v14" stroke="#2a6fb8" strokeWidth="1.600" /><path d="M12 9l4-3.500V8h2v2h-2v2.500z" fill="#c8401c" /></Axes></ToolButton>
          <ToolSeparator />
          <DropButton $w={46} aria-label="インディケータ"><IndicatorIcon /><Caret /></DropButton>
          <DropButton $w={47} aria-label="時間足"><ClockIcon /><Caret /></DropButton>
          <DropButton $w={47} aria-label="テンプレート"><TemplateIcon /><Caret /></DropButton>
        </ToolGroup>
        <ToolTail>
          <svg width="18" height="18" viewBox="0 0 18 18">
            <path d="M7 10.500l-5.500 5.500" stroke="#2a56b8" strokeWidth="3.200" strokeLinecap="round" />
            <circle cx="11" cy="6.500" r="5" fill="#e6f0fb" stroke="#3a6fd0" strokeWidth="2" />
          </svg>
          <MailButton aria-label="メール">
            <svg width="22" height="30" viewBox="0 0 22 30"><path d="M11 12c6 0 10 2 10 6s-4 6-9 6l-5 3 1-4c-3-1-7-2-7-5s4-6 10-6z" fill="#f6f6f6" stroke="#a0a0a0" strokeWidth="1.500" /></svg>
            <MailBadge>1</MailBadge>
          </MailButton>
        </ToolTail>
      </Toolbar>
      <Toolbar $h={33}>
        <ToolGroup $w={680}>
          <Grip />
          <FrameButton $w={435} $on aria-label="カーソル" />
          <FrameButton $w={35}>M15</FrameButton>
          <FrameButton $w={32} $on>M30</FrameButton>
          <FrameButton $w={36}>H1</FrameButton>
          <FrameButton $w={33}>H4</FrameButton>
          <FrameButton $w={35}>D1</FrameButton>
          <FrameButton $w={34}>W1</FrameButton>
          <FrameButton $w={30}>MN</FrameButton>
        </ToolGroup>
      </Toolbar>
    </>
  );
}

function LeftColumn() {
  return (
    <Side>
      <Pane $h={248}>
        <PaneHead><PaneTitle>ナ</PaneTitle></PaneHead>
        <PaneBox>
          <Tree>
            {['ボリューム', 'ビル・ウィリアムス'].map(label => (
              <TreeItem key={label}><ExpandBox /><FuncIcon /><span>{label}</span></TreeItem>
            ))}
          </Tree>
          <Track $w={21} $bg="#e2e2e2" $top={0} />
        </PaneBox>
        <Tabs>
          <Tab $w={56} $on>全般</Tab>
          <Tab $w={90}>お気に入り</Tab>
        </Tabs>
      </Pane>
      <Pane>
        <PaneHead>
          <PaneTitle>気配値表示: 15:29:03</PaneTitle>
          <CloseButton aria-label="閉じる"><PaneCross /></CloseButton>
        </PaneHead>
        <PaneBox>
          <WatchTable>
            <colgroup><col /><col style={{ width: 88 }} /><col style={{ width: 89 }} /></colgroup>
            <thead><tr><th>通貨ペア</th><th>Bid</th><th>Ask</th></tr></thead>
            <tbody>
              {pairs.map(([name, bid, ask, up]) => (
                <WatchRow key={name} $up={up} $selected={name === 'USDJPY-cd'}>
                  <td><Pair><TrendArrow up={up} />{name}</Pair></td>
                  <td>{bid}</td>
                  <td>{ask}</td>
                </WatchRow>
              ))}
            </tbody>
          </WatchTable>
          <Track $w={22} $top={21}><Thumb $h={130} /></Track>
        </PaneBox>
        <Tabs>
          <Tab $w={112} $on>通貨ペアリスト</Tab>
          <Tab $w={108}>ティックチャート</Tab>
        </Tabs>
      </Pane>
    </Side>
  );
}

function Chart() {
  return (
    <ChartPanel>
      <Plot>
        <svg>
          <g stroke="#778899" strokeDasharray="3 3">
            {columns.map(x => <line key={x} x1={x} x2={x} y1="0" y2="100%" />)}
            {rows.map(y => <line key={y} x1="0" x2="100%" y1={y} y2={y} />)}
          </g>
          <line x1="0" x2="100%" y1="434.5" y2="434.5" stroke="#778899" />
          <path d={bars} stroke="#00ff00" strokeWidth="1" />
          <Signal x={262} y={271} down heavy />
          <Signal x={504} y={565} heavy />
          <Signal x={886} y={377} />
          <Signal x={884} y={381} />
          <Signal x={885.5} y={432} />
          <Signal x={900} y={463} />
          <Signal x={901} y={465} />
          <Signal x={1291} y={559} />
        </svg>
        <Quote>147.524 147.524 147.365 147.454</Quote>
      </Plot>
      <PriceAxis>
        {prices.map((p, i) => <Price key={i}>{p}</Price>)}
        <CurrentPrice>147.454</CurrentPrice>
      </PriceAxis>
      <DateAxis>{dates.map(d => <DateLabel key={d}>{d}</DateLabel>)}</DateAxis>
    </ChartPanel>
  );
}

/* Brackets and colons keep their full-width cell inside proportional kana. */
const Title = ({ text }: { text: string }) => (
  <span>{text.split(/([（）：])/).map((part, i) => (i % 2 ? <FullWidth key={i}>{part}</FullWidth> : part))}</span>
);

function TerminalPanel() {
  return (
    <Terminal>
      <TerminalStrip>
        <CloseButton aria-label="閉じる"><PaneCross /></CloseButton>
        <TerminalName>ターミナル</TerminalName>
      </TerminalStrip>
      <TerminalBody>
        <Articles>
          <ArticleTable>
            <colgroup><col /><col style={{ width: 556 }} /><col style={{ width: 101 }} /></colgroup>
            <thead>
              <tr>
                <th>名前</th>
                <th>カテゴリ</th>
                <th><SortLabel>日付<svg width="8" height="8" viewBox="0 0 8 8"><path d="M7.500.5H.5L3.500 7" fill="none" stroke="#777" /></svg></SortLabel></th>
              </tr>
            </thead>
            <tbody>
              {articles.map(([title, category, date], i) => (
                <tr key={i}>
                  <td><ArticleName>{title && <PageIcon />}<Title text={title} /></ArticleName></td>
                  <td>{category}</td>
                  <td>{date}</td>
                </tr>
              ))}
            </tbody>
          </ArticleTable>
          <Track $w={18} $top={21}><Thumb $h={21} /></Track>
        </Articles>
        <Tabs>
          {terminalTabs.map(([label, w]) => (
            <Tab key={label} $w={w} $on={label === '記事'}>
              {label}
              {label === 'メールボックス' && <TabCount>133</TabCount>}
            </Tab>
          ))}
        </Tabs>
      </TerminalBody>
    </Terminal>
  );
}

function Status() {
  return (
    <StatusBar>
      <StatusCell>F1キーでヘルプが表示されます</StatusCell>
      <StatusCell $w={149}>Default</StatusCell>
      <StatusCell $w={131} />
      <StatusCell $w={90} />
      <StatusCell $w={88} />
      <StatusCell $w={85} />
      <StatusCell $w={87} />
      <StatusCell $w={84} />
      <StatusCell $w={173}>
        <svg width="31" height="20" viewBox="0 0 31 20">
          {[0, 1, 2, 3, 4, 5, 6, 7].map(k => (
            <g key={k}>
              <rect x={k * 4} y="3" width="3" height={11 - k} fill="#5a7800" />
              <rect x={k * 4} y={15 - k} width="3" height={5 + k} fill="#0b3f5c" />
            </g>
          ))}
        </svg>
        748/3 kb
      </StatusCell>
    </StatusBar>
  );
}

function TaskbarPanel() {
  return (
    <Taskbar>
      <Weather>
        <svg width="31" height="32" viewBox="0 0 31 32">
          <path d="M19 2c8 4 10 14 5 20-5 6-14 6-19 2 10-1 16-10 14-22z" fill="#f7a928" />
          <path d="M5 13a4 4 0 0 1 0-8 6 6 0 0 1 11 0 4 4 0 0 1 0 8z" fill="#8fb6f0" />
          <path d="M15 29a4 4 0 0 1 0-7 6 6 0 0 1 11-1 4 4 0 0 1 1 8z" fill="#7ea8ea" />
        </svg>
        <span>26°C<Muted>晴れ時々くもり</Muted></span>
      </Weather>
      <TaskIcons>
        <StartButton aria-label="スタート">
          <svg width="29" height="29" viewBox="0 0 29 29">
            <defs><linearGradient id="win" x1="0" y1="0" x2="1" y2="1"><stop offset="0" stopColor="#7eeeff" /><stop offset="1" stopColor="#0a90f8" /></linearGradient></defs>
            <path d="M0 0h14v14H0zM15 0h14v14H15zM0 15h14v14H0zM15 15h14v14H15z" fill="url(#win)" />
          </svg>
        </StartButton>
        <SearchBox>
          <svg width="19" height="20" viewBox="0 0 19 20"><circle cx="8" cy="8" r="6.800" fill="none" stroke="#222" strokeWidth="1.900" /><path d="M12.500 13l5.500 6" stroke="#222" strokeWidth="2.200" /></svg>
          <input placeholder="検索" aria-label="検索" />
          <CameraIcon />
        </SearchBox>
        {taskIcons.map(({ name, icon }) => <TaskButton key={name} aria-label={name}>{icon}</TaskButton>)}
        <TaskButton $on aria-label="FX"><FxIcon /><RunMark $on /></TaskButton>
        <TaskButton aria-label="MetaEditor"><BookIcon /><RunMark /></TaskButton>
      </TaskIcons>
      <Tray>
        <TrayButton $w={40} aria-label="隠れているインジケーター"><svg width="15" height="9" viewBox="0 0 15 9"><path d="M1 8l6.500-6.500L14 8" fill="none" stroke="#fff" strokeWidth="1.800" /></svg></TrayButton>
        <TrayButton $w={40} aria-label="入力モード"><svg width="16" height="20" viewBox="0 0 16 20"><path d="M1 19.500L8 1l7 18.500M3.500 13h9" fill="none" stroke="#fff" strokeWidth="1.500" /></svg></TrayButton>
        <TrayButton $w={40} aria-label="ネットワーク"><svg width="20" height="16" viewBox="0 0 20 16" fill="none"><path d="M1 6c5-6 13-6 18 0" stroke="#666" strokeWidth="1.500" /><path d="M4 9c3.500-4 8.500-4 12 0M6.500 11.500c2-2.500 5-2.500 7 0" stroke="#fff" strokeWidth="1.700" /><circle cx="10" cy="13.800" r="1.600" fill="#fff" /></svg></TrayButton>
        <TrayButton $w={21} aria-label="音量"><svg width="21" height="16" viewBox="0 0 21 16" fill="none"><path d="M1 5.500h3.500L9 1.500v13L4.500 10.500H1z" stroke="#fff" strokeWidth="1.500" /><path d="M11.500 5c1.500 2 1.500 4 0 6" stroke="#fff" strokeWidth="1.500" /><path d="M14 3c3 3 3 7 0 10M17 1c4 4 4 10 0 14" stroke="#666" strokeWidth="1.400" /></svg></TrayButton>
        <TrayButton $w={39} aria-label="バッテリー"><svg width="21" height="17" viewBox="0 0 21 17"><rect x="1.500" y="4" width="15.500" height="11.500" rx="2.500" fill="none" stroke="#fff" strokeWidth="1.600" /><path d="M7 6.500h8v6.500H4V9z" fill="#fff" /><path d="M18 8h2.500v4H18z" fill="#fff" /><path d="M4.500 0L0 6.500h3L2 11l5-6.500H4z" fill="#fff" stroke="#26211c" strokeWidth="0.600" /></svg></TrayButton>
        <Clock>21:29<br />2025/08/20</Clock>
      </Tray>
    </Taskbar>
  );
}

export default function App() {
  return (
    <Desktop>
      <Global />
      <AppWindow>
        <TitleBar>
          <svg width="20" height="20" viewBox="0 0 20 20"><rect width="20" height="20" rx="2" fill="#c8202c" /><path d="M2 4l5 5M3 16l4-5" stroke="#fff" strokeWidth="2" /></svg>
          <TitleText>M30]</TitleText>
          <WindowButtons>
            <WindowButton aria-label="最小化"><svg width="12" height="12" viewBox="0 0 12 12"><path d="M0 6h12" stroke="#000" strokeWidth="1.200" /></svg></WindowButton>
            <WindowButton aria-label="最大化"><svg width="12" height="12" viewBox="0 0 12 12"><rect x="0.600" y="0.600" width="10.800" height="10.800" rx="1" fill="none" stroke="#000" strokeWidth="1.200" /></svg></WindowButton>
            <WindowButton aria-label="閉じる"><Cross size={12} color="#000" /></WindowButton>
          </WindowButtons>
        </TitleBar>
        <MenuBar>
          <svg width="16" height="20" viewBox="0 0 16 20"><path d="M1 1h14v10H1zM6 8h9v11H6z" fill="#dceafc" stroke="#4a80d8" strokeWidth="1.500" /><path d="M3 5h3M9 12h4" stroke="#4a80d8" /></svg>
          <MenuItems><span>ウィンドウ (W)</span><span>ヘルプ (H)</span></MenuItems>
          <MdiButtons>
            <MdiButton aria-label="ウィンドウの最小化"><svg width="8" height="8" viewBox="0 0 8 8"><path d="M1 6.500h6" stroke="#6f7f92" strokeWidth="2" /></svg></MdiButton>
            <MdiButton aria-label="元に戻す"><svg width="9" height="9" viewBox="0 0 9 9"><path d="M3 3V1h5v4H6M1 4h5v4H1z" fill="none" stroke="#6f7f92" strokeWidth="1.400" /></svg></MdiButton>
            <MdiButton aria-label="ウィンドウを閉じる"><Cross size={8} w={3} color="#6f7f92" /></MdiButton>
          </MdiButtons>
        </MenuBar>
        <Toolbars />
        <Main>
          <LeftColumn />
          <Chart />
        </Main>
        <TerminalPanel />
        <Status />
      </AppWindow>
      <TaskbarPanel />
      <AlertDialog />
    </Desktop>
  );
}
